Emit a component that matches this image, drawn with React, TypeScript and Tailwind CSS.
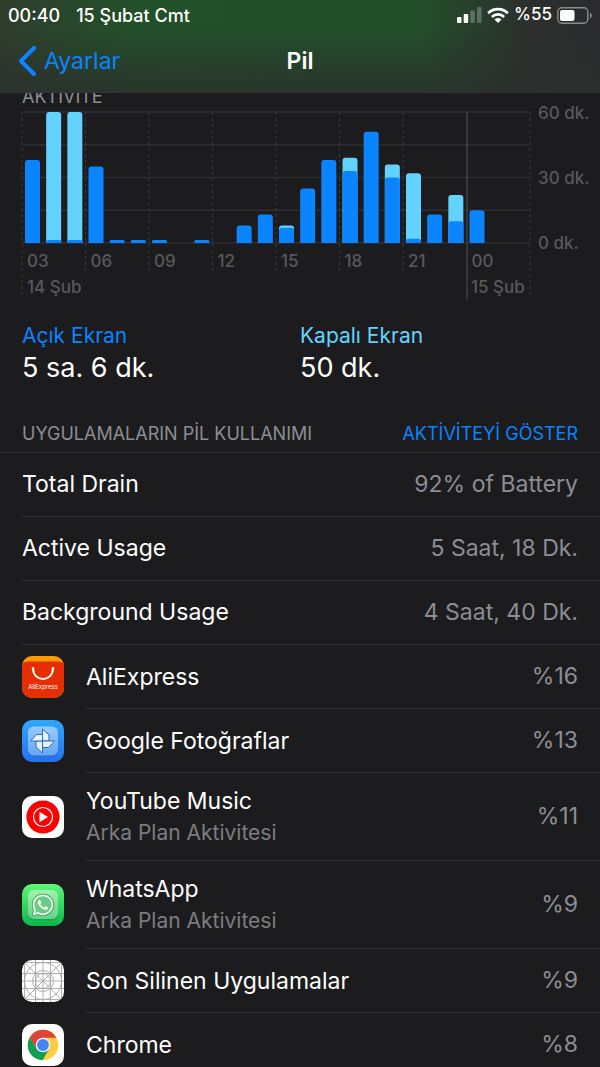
import React, { useState } from 'react';

interface HourUsage {
  hour: number;
  screenOn: number;
  total: number;
}

interface AppUsage {
  name: string;
  detail?: string;
  percent: string;
  icon: React.ReactNode;
}

const usage: HourUsage[] = [
  { hour: 0, screenOn: 38, total: 38 },
  { hour: 1, screenOn: 1, total: 60 },
  { hour: 2, screenOn: 1, total: 60 },
  { hour: 3, screenOn: 35, total: 35 },
  { hour: 4, screenOn: 1, total: 1 },
  { hour: 5, screenOn: 1, total: 1 },
  { hour: 6, screenOn: 1, total: 1 },
  { hour: 8, screenOn: 1, total: 1 },
  { hour: 10, screenOn: 8, total: 8 },
  { hour: 11, screenOn: 13, total: 13 },
  { hour: 12, screenOn: 7, total: 8 },
  { hour: 13, screenOn: 25, total: 25 },
  { hour: 14, screenOn: 38, total: 38 },
  { hour: 15, screenOn: 33, total: 39 },
  { hour: 16, screenOn: 51, total: 51 },
  { hour: 17, screenOn: 30, total: 36 },
  { hour: 18, screenOn: 2, total: 32 },
  { hour: 19, screenOn: 13, total: 13 },
  { hour: 20, screenOn: 10, total: 22 },
  { hour: 21, screenOn: 15, total: 15 },
];

const hourLabels = ['03', '06', '09', '12', '15', '18', '21', '00'];

const summary = [
  { label: 'Total Drain', value: '92% of Battery' },
  { label: 'Active Usage', value: '5 Saat, 18 Dk.' },
  { label: 'Background Usage', value: '4 Saat, 40 Dk.' },
];

// Chart geometry, in viewBox units
const LEFT = 22;
const RIGHT = 530;
const TOP = 6;
const BASE = 137;
const HOUR = (RIGHT - LEFT) / 24;
const BAR = 15;

const barPath = (x: number, minutes: number) => {
  const h = Math.max((minutes * (BASE - TOP)) / 60, 3);
  const r = Math.min(3, h / 2);
  const y = BASE - h;
  return `M${x} ${BASE}V${y + r}Q${x} ${y} ${x + r} ${y}H${x + BAR - r}Q${x + BAR} ${y} ${x + BAR} ${y + r}V${BASE}Z`;
};

const ActivityChart: React.FC = () => (
  <svg viewBox="0 0 600 194" className="block h-auto w-full" role="img" aria-label="Aktivite">
    {[0, 15, 30, 45, 60].map((m) => {
      const y = BASE - (m * (BASE - TOP)) / 60;
      return <line key={m} x1={LEFT} x2={RIGHT} y1={y} y2={y} stroke="#2e2e30" strokeWidth="1.3" />;
    })}
    {[0, 1, 2, 3, 4, 5, 6, 8].map((i) => (
      <line
        key={i}
        x1={LEFT + i * 3 * HOUR}
        x2={LEFT + i * 3 * HOUR}
        y1={TOP}
        y2={i === 0 || i === 8 ? 193 : 169}
        stroke="#38383a"
        strokeDasharray="3 3"
      />
    ))}
    <line x1="467" x2="467" y1={TOP} y2="193" stroke="#48484a" strokeWidth="1.3" />
    {usage.map(({ hour, screenOn, total }) => {
      const x = LEFT + hour * HOUR + 3;
      return (
        <g key={hour}>
          {total > screenOn && <path d={barPath(x, total)} fill="#64d2ff" />}
          <path d={barPath(x, screenOn)} fill="#0a84ff" />
        </g>
      );
    })}
    <g className="fill-[#58585b] text-[17px] font-medium">
      {hourLabels.map((label, i) => (
        <text key={label} x={LEFT + i * 3 * HOUR + 5} y="161">{label}</text>
      ))}
      <text x="27" y="187">14 Şub</text>
      <text x="471" y="187">15 Şub</text>
      <text x="538" y="13">60 dk.</text>
      <text x="538" y="78">30 dk.</text>
      <text x="538" y="143">0 dk.</text>
    </g>
  </svg>
);

const AliExpressIcon = () => (
  <svg viewBox="0 0 42 42" className="size-full">
    <rect width="42" height="42" fill="#ff9a00" />
    <path d="M0 9Q1 5.500 6 5.500H36Q41 5.500 42 9V42H0Z" fill="#e62e04" />
    <path d="M11 12.500C11.500 26.500 30.500 26.500 31 12.500" fill="none" stroke="#fff" strokeWidth="2" strokeLinecap="round" />
    <circle cx="11" cy="12.500" r="1.300" fill="#fff" />
    <circle cx="31" cy="12.500" r="1.300" fill="#fff" />
    <text x="21" y="32.500" textAnchor="middle" fill="#fff" className="text-[6px]">AliExpress</text>
  </svg>
);

const PhotosIcon = () => (
  <svg viewBox="0 0 42 42" className="size-full">
    <defs>
      <linearGradient id="photosBg" x1="0" y1="0" x2="0" y2="1">
        <stop stopColor="#2fa8fb" />
        <stop offset="1" stopColor="#2770ee" />
      </linearGradient>
      <linearGradient id="photosPlate" x1="0" y1="0" x2="0" y2="1">
        <stop stopColor="#93cdfc" />
        <stop offset="1" stopColor="#6ba5f3" />
      </linearGradient>
    </defs>
    <rect width="42" height="42" fill="url(#photosBg)" />
    <rect x="6" y="7" width="30" height="30" rx="6" fill="#1c62c8" opacity=".4" />
    <rect x="6" y="6.500" width="30" height="29" rx="6" fill="url(#photosPlate)" />
    <g fill="#e6f1fd" stroke="#2f6cb0" strokeWidth="1" strokeLinejoin="round">
      {[0, 90, 180, 270].map((angle) => (
        <path key={angle} d="M20.500 21V9L27 15V21Z" transform={`rotate(${angle} 20.500 21)`} />
      ))}
    </g>
  </svg>
);

const YouTubeMusicIcon = () => (
  <svg viewBox="0 0 42 42" className="size-full">
    <rect width="42" height="42" fill="#fff" />
    <circle cx="21" cy="21" r="16.600" fill="#f00" />
    <circle cx="21" cy="21" r="9.500" fill="none" stroke="#fff" strokeWidth="1.200" />
    <path d="M17.500 15.800L26 21L17.500 26.200Z" fill="#fff" />
  </svg>
);

const WhatsAppIcon = () => (
  <svg viewBox="0 0 42 42" className="size-full">
    <defs>
      <linearGradient id="waBg" x1="0" y1="0" x2="0" y2="1">
        <stop stopColor="#5ff777" />
        <stop offset="1" stopColor="#0cb64b" />
      </linearGradient>
      <linearGradient id="waPlate" x1="0" y1="0" x2="0" y2="1">
        <stop stopColor="#a0f3ae" />
        <stop offset="1" stopColor="#68cf8b" />
      </linearGradient>
    </defs>
    <rect width="42" height="42" fill="url(#waBg)" />
    <rect x="6" y="7" width="30" height="29.500" rx="6" fill="#078a3a" opacity=".4" />
    <rect x="6" y="6" width="30" height="29" rx="6" fill="url(#waPlate)" />
    <g transform="translate(10.500 10.500) scale(.87)">
      <path
        d="M.057 24l1.687-6.163a11.867 11.867 0 0 1-1.587-5.946C.16 5.335 5.495 0 12.050 0a11.817 11.817 0 0 1 8.413 3.488 11.824 11.824 0 0 1 3.480 8.414c-.003 6.557-5.338 11.892-11.893 11.892a11.900 11.900 0 0 1-5.688-1.448L.057 24z"
        fill="#6cc987"
        stroke="#3a9a5b"
        strokeWidth="2"
      />
      <path
        d="M17.472 14.382c-.297-.149-1.758-.867-2.030-.967-.273-.099-.471-.148-.670.150-.197.297-.767.966-.940 1.164-.173.199-.347.223-.644.075-.297-.150-1.255-.463-2.390-1.475-.883-.788-1.480-1.761-1.653-2.059-.173-.297-.018-.458.130-.606.134-.133.298-.347.446-.520.149-.174.198-.298.298-.497.099-.198.050-.371-.025-.520-.075-.149-.669-1.612-.916-2.207-.242-.579-.487-.500-.669-.510-.173-.008-.371-.010-.570-.010-.198 0-.520.074-.792.372-.272.297-1.040 1.016-1.040 2.479 0 1.462 1.065 2.875 1.213 3.074.149.198 2.096 3.200 5.077 4.487.709.306 1.262.489 1.694.625.712.227 1.360.195 1.871.118.571-.085 1.758-.719 2.006-1.413.248-.694.248-1.289.173-1.413-.074-.124-.272-.198-.570-.347m-5.421 7.403h-.004a9.870 9.870 0 0 1-5.031-1.378l-.361-.214-3.741.982.998-3.648-.235-.374a9.860 9.860 0 0 1-1.510-5.260c.001-5.450 4.436-9.884 9.888-9.884 2.640 0 5.122 1.030 6.988 2.898a9.825 9.825 0 0 1 2.893 6.994c-.003 5.450-4.437 9.884-9.885 9.884m8.413-18.297A11.815 11.815 0 0 0 12.050 0C5.495 0 .160 5.335.157 11.892c0 2.096.547 4.142 1.588 5.945L.057 24l6.305-1.654a11.882 11.882 0 0 0 5.683 1.448h.005c6.554 0 11.890-5.335 11.893-11.893a11.821 11.821 0 0 0-3.480-8.413z"
        fill="#e8fdec"
      />
    </g>
  </svg>
);

const PlaceholderIcon = () => (
  <svg viewBox="0 0 42 42" className="size-full">
    <rect width="42" height="42" fill="#fff" />
    <g fill="none" stroke="#a8a8aa" strokeWidth=".9">
      <path d="M0 0L42 42M42 0L0 42M2.500 0V42M39.500 0V42M0 2.500H42M0 39.500H42M13.500 0V42M28.500 0V42M21 0V42M0 13.500H42M0 28.500H42M0 21H42" />
      <circle cx="21" cy="21" r="18.500" />
      <circle cx="21" cy="21" r="10.500" />
      <circle cx="21" cy="21" r="7.500" />
    </g>
  </svg>
);

const ChromeIcon = () => (
  <svg viewBox="0 0 42 42" className="size-full">
    <rect width="42" height="42" fill="#fff" />
    <circle cx="21" cy="21" r="15.300" fill="#ffcd40" />
    <path d="M21 13.700H34.400A15.300 15.300 0 0 0 7.700 13.400L14.700 24.700Z" fill="#db4437" />
    <path d="M7.700 13.400A15.300 15.300 0 0 0 20.500 36.300L27.300 24.700L21 28L14.700 24.700Z" fill="#0f9d58" />
    <circle cx="21" cy="21" r="7.300" fill="#f1f1f1" />
    <circle cx="21" cy="21" r="5.900" fill="#4285f4" />
  </svg>
);

const apps: AppUsage[] = [
  { name: 'AliExpress', percent: '%16', icon: <AliExpressIcon /> },
  { name: 'Google Fotoğraflar', percent: '%13', icon: <PhotosIcon /> },
  { name: 'YouTube Music', detail: 'Arka Plan Aktivitesi', percent: '%11', icon: <YouTubeMusicIcon /> },
  { name: 'WhatsApp', detail: 'Arka Plan Aktivitesi', percent: '%9', icon: <WhatsAppIcon /> },
  { name: 'Son Silinen Uygulamalar', percent: '%9', icon: <PlaceholderIcon /> },
  { name: 'Chrome', percent: '%8', icon: <ChromeIcon /> },
];

const StatusBar: React.FC = () => (
  <div className="flex h-[30px] items-center justify-between px-2 font-medium">
    <div className="flex gap-4 text-[18px]">
      <span>00:40</span>
      <span>15 Şubat Cmt</span>
    </div>
    <div className="flex items-center gap-[5px] text-[17px]">
      <svg viewBox="0 0 25 16" className="h-4 w-[25px]" fill="#fff">
        <rect x="0" y="10" width="4.500" height="6" rx="1" />
        <rect x="6.700" y="7" width="4.500" height="9" rx="1" />
        <rect x="13.300" y="3.500" width="4.500" height="12.500" rx="1" opacity=".25" />
        <rect x="20" y="0" width="4.500" height="16" rx="1" opacity=".25" />
      </svg>
      <svg viewBox="0 0 22 16" className="h-4 w-[22px]" fill="none" stroke="#fff" strokeWidth="2.800">
        <path d="M1.200 6.200A14 14 0 0 1 20.800 6.200" />
        <path d="M4.900 9.900A8.700 8.700 0 0 1 17.100 9.900" />
        <path d="M11 16L7.500 12.500A5 5 0 0 1 14.500 12.500Z" fill="#fff" stroke="none" />
      </svg>
      <span>%55</span>
      <svg viewBox="0 0 35 17" className="h-[17px] w-[35px]">
        <rect x=".8" y=".8" width="30" height="15.400" rx="4" fill="none" stroke="#8b8b8d" strokeWidth="1.400" />
        <rect x="3" y="3" width="14.500" height="11" rx="2" fill="#fff" />
        <path d="M33 5.500Q34.800 6.500 34.800 8.500T33 11.500Z" fill="#8b8b8d" />
      </svg>
    </div>
  </div>
);

const App: React.FC = () => {
  const [showActivity, setShowActivity] = useState(false);

  return (
    <div className="flex h-screen flex-col overflow-hidden bg-[#1c1c1e] font-['Inter','Liberation_Sans',sans-serif] text-white">
      <header className="shrink-0 border-b border-[#343438] bg-[linear-gradient(to_bottom,transparent_30%,#2b2f2dcc),linear-gradient(to_right,#2f3d2d,#225029_22%,#224f2a_70%,#2c2f2d_88%,#2b2b2d)]">
        <StatusBar />
        <nav className="grid h-[62px] grid-cols-3 items-center px-[18px] text-[23px]">
          <button type="button" className="flex items-center gap-2 justify-self-start text-[#0a84ff]">
            <svg viewBox="0 0 18 30" className="h-[30px] w-[18px]" fill="none" stroke="currentColor" strokeWidth="4" strokeLinecap="round" strokeLinejoin="round">
              <path d="M16 2L3 15L16 28" />
            </svg>
            Ayarlar
          </button>
          <h1 className="text-center font-semibold">Pil</h1>
        </nav>
      </header>

      <main className="min-h-0 grow overflow-y-auto [scrollbar-width:none]">
        <h2 className="-mt-[5px] px-[22px] text-[18px] leading-[18px] text-[#8d8d93]">AKTİVİTE</h2>
        <ActivityChart />

        <dl className="mt-[22px] grid grid-cols-2 px-[22px]">
          <div>
            <dt className="text-[21px] leading-7 text-[#0a84ff]">Açık Ekran</dt>
            <dd className="text-[27px] leading-9">5 sa. 6 dk.</dd>
          </div>
          <div>
            <dt className="text-[21px] leading-7 text-[#64d2ff]">Kapalı Ekran</dt>
            <dd className="text-[27px] leading-9">50 dk.</dd>
          </div>
        </dl>

        <div className="mt-9 flex h-[31px] items-start justify-between border-b border-[#2f2f31] px-[22px] text-[18px] leading-6">
          <h2 className="text-[#8d8d93]">UYGULAMALARIN PİL KULLANIMI</h2>
          <button type="button" onClick={() => setShowActivity(!showActivity)} className="text-[#0a84ff]">
            AKTİVİTEYİ GÖSTER
          </button>
        </div>

        <dl className="pl-[22px] text-[23px]">
          {summary.map((item) => (
            <div key={item.label} className="flex h-16 items-center justify-between border-b border-[#343436] pr-[22px]">
              <dt>{item.label}</dt>
              <dd className="text-[#8d8d93]">{item.value}</dd>
            </div>
          ))}
        </dl>

        <ul className="text-[23px]">
          {apps.map((app) => (
            <li key={app.name} className="flex items-center gap-[22px] pl-[22px]">
              <div className="size-[42px] shrink-0 overflow-hidden rounded-[10px]">{app.icon}</div>
              <div
                className={`flex grow items-center justify-between border-b border-[#343436] pr-[22px] ${
                  app.detail ? 'h-[88px]' : 'h-16'
                }`}
              >
                <div>
                  <p className="leading-8">{app.name}</p>
                  {app.detail && <p className="text-[21px] leading-8 text-[#7c7c80]">{app.detail}</p>}
                </div>
                <span className="text-[#8d8d93]">{app.percent}</span>
              </div>
            </li>
          ))}
        </ul>
      </main>
    </div>
  );
};

export default App;
